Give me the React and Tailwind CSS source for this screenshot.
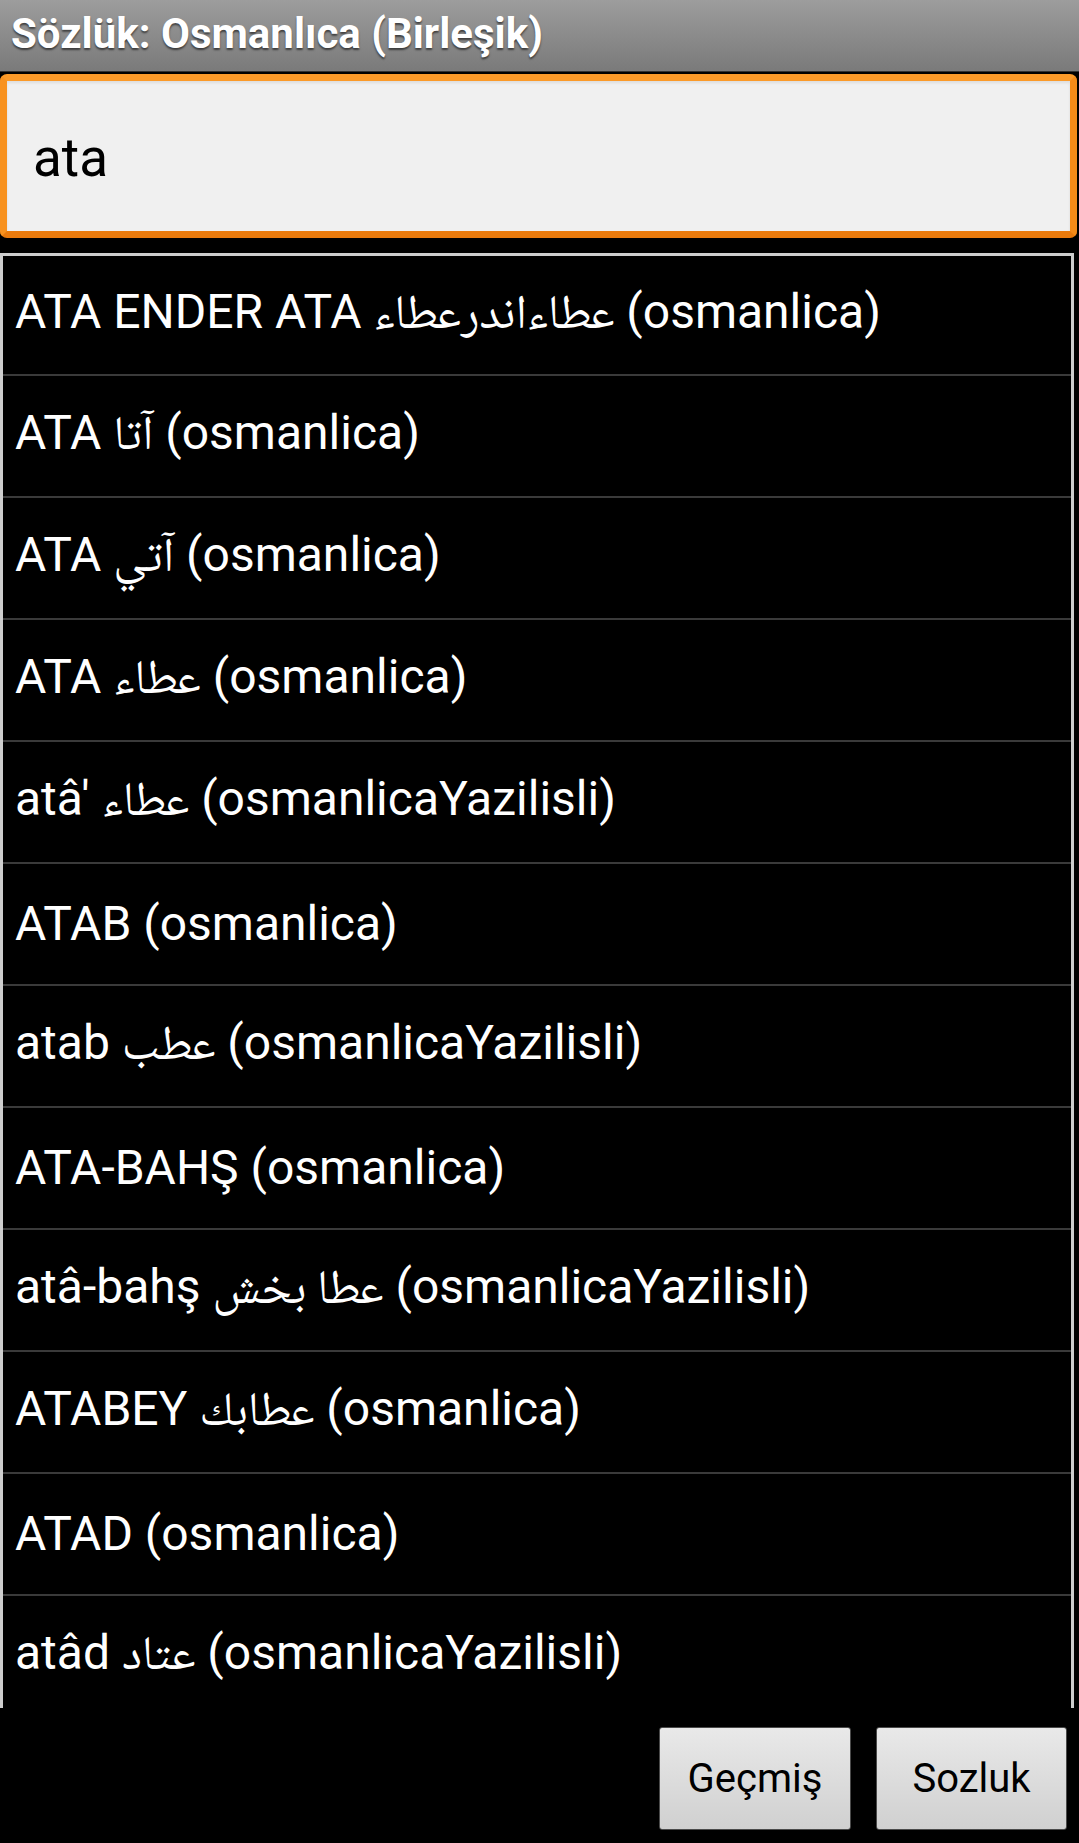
import React from "react";

const rows = [
  { a: "ATA ENDER ATA", b: "عطاءاندرعطاء", c: "osmanlica" },
  { a: "ATA", b: "آتا", c: "osmanlica" },
  { a: "ATA", b: "آتي", c: "osmanlica" },
  { a: "ATA", b: "عطاء", c: "osmanlica" },
  { a: "atâ'", b: "عطاء", c: "osmanlicaYazilisli" },
  { a: "ATAB", b: "", c: "osmanlica" },
  { a: "atab", b: "عطب", c: "osmanlicaYazilisli" },
  { a: "ATA-BAHŞ", b: "", c: "osmanlica" },
  { a: "atâ-bahş", b: "عطا بخش", c: "osmanlicaYazilisli" },
  { a: "ATABEY", b: "عطابك", c: "osmanlica" },
  { a: "ATAD", b: "", c: "osmanlica" },
  { a: "atâd", b: "عتاد", c: "osmanlicaYazilisli" },
];

export default function App() {
  return (
    <div
      className="w-[1079px] h-[1843px] bg-black flex flex-col overflow-hidden"
      style={{ fontFamily: "Roboto, 'DejaVu Sans', 'Noto Sans', sans-serif" }}
    >
      {/* Title bar */}
      <div className="h-[72px] shrink-0 bg-gradient-to-b from-[#9d9d9d] to-[#7a7a7a] border-b border-[#333] flex items-center pl-[11px] pb-[4px]">
        <span className="text-[42px] font-bold text-white leading-none [text-shadow:0_2px_2px_rgba(0,0,0,0.55)]">
          Sözlük: Osmanlıca (Birleşik)
        </span>
      </div>

      {/* Search field */}
      <div className="mt-[2px] h-[164px] w-[1077px] shrink-0 rounded-[7px] border-[7px] border-t-[#fb9a29] border-l-[#f8921f] border-r-[#f58b18] border-b-[#ea7a0c] bg-[#f0f0f0] flex items-center pl-[26px] pt-[4px] shadow-[inset_0_2px_3px_rgba(0,0,0,0.08)]">
        <span className="text-[53px] leading-[53px] text-black">ata</span>
      </div>

      {/* List */}
      <div className="mt-[15px] h-[1455px] w-[1074px] shrink-0 border-t-[3px] border-x-[3px] border-[#cdcdcd] overflow-hidden flex flex-col">
        {rows.map((r, i) => (
          <div
            key={i}
            className="shrink-0 h-[122px] first:h-[120px] border-b-2 border-[#3a3a3a] flex items-center pl-[12px] text-white text-[48px] leading-none whitespace-nowrap"
          >
            <span>
              {r.a}{" "}
              {r.b && (
                <>
                  <bdi
                    className="text-[48px] font-light"
                    style={{ fontFamily: "'Noto Naskh Arabic', 'Noto Sans Arabic', 'Droid Arabic Naskh', 'DejaVu Sans', sans-serif" }}
                  >
                    {r.b}
                  </bdi>{" "}
                </>
              )}
              ({r.c})
            </span>
          </div>
        ))}
      </div>

      {/* Bottom buttons */}
      <div className="flex-1 flex justify-end items-start gap-[25px] pt-[19px] pr-[12px]">
        <button className="w-[192px] h-[103px] rounded-[3px] border border-[#4a4a4a] bg-gradient-to-b from-[#e9e9e9] to-[#d0d0d0] text-black text-[40px] leading-none flex items-center justify-center">
          Geçmiş
        </button>
        <button className="w-[191px] h-[103px] rounded-[3px] border border-[#4a4a4a] bg-gradient-to-b from-[#e9e9e9] to-[#d0d0d0] text-black text-[40px] leading-none flex items-center justify-center">
          Sozluk
        </button>
      </div>
    </div>
  );
}
